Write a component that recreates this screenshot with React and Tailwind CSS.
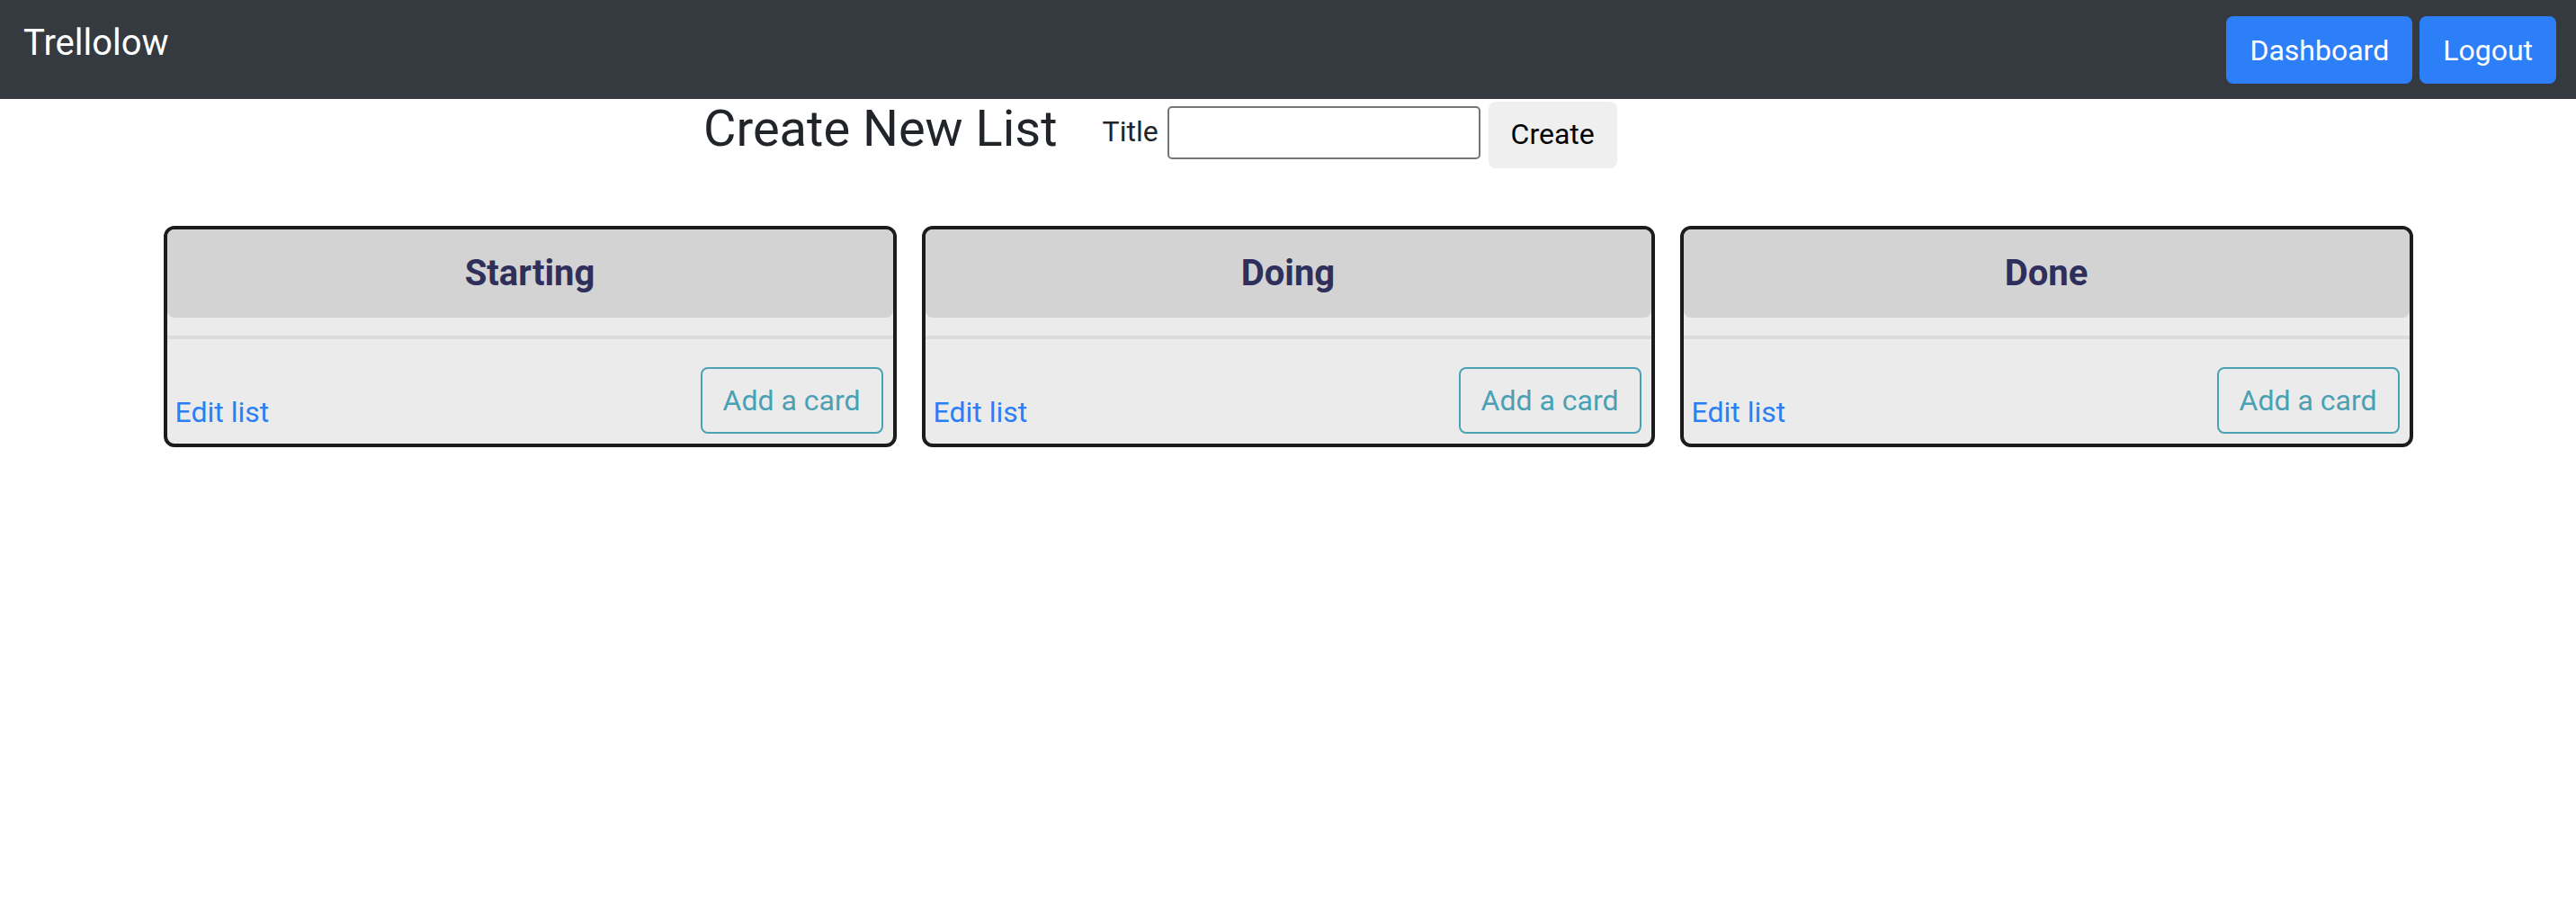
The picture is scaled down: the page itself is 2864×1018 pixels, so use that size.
import { useState } from 'react'

const lists = [
  { id: 1, name: 'Starting' },
  { id: 2, name: 'Doing' },
  { id: 3, name: 'Done' },
]

function ListCard({ list }) {
  return (
    <div className="w-[815px] border-[4px] border-[#1c1c1c] rounded-[12px] bg-[#ecebec] overflow-hidden">
      <div className="h-[98px] bg-[#d3d3d3] rounded-[8px] flex items-center justify-center">
        <span className="text-[40px] font-bold text-[#2f2f5c]">{list.name}</span>
      </div>
      <div className="mt-[20px] h-[4px] bg-[#dcdbdb]"></div>
      <div className="flex justify-between items-end pt-[31px] pb-[11px] pl-[9px] pr-[11px]">
        <a href="#" className="text-[32px] leading-[48px] text-[#2b7ff5]">Edit list</a>
        <button className="h-[74px] px-[23px] border-[2px] border-[#4aa3b5] rounded-[8px] text-[32px] text-[#4aa1b3]">
          Add a card
        </button>
      </div>
    </div>
  )
}

function App() {
  const [title, setTitle] = useState('')

  return (
    <div className="w-full min-h-screen bg-white font-['Roboto',sans-serif]">
      <nav className="h-[110px] bg-[#343a40] flex justify-between items-start pt-[18px] pl-[26px] pr-[22px]">
        <span className="text-[40px] leading-[60px] text-white">Trellolow</span>
        <div className="flex gap-[8px]">
          <button className="h-[75px] px-[26px] rounded-[8px] bg-[#2d7ff7] text-[32px] text-white">Dashboard</button>
          <button className="h-[75px] px-[26px] rounded-[8px] bg-[#2d7ff7] text-[32px] text-white">Logout</button>
        </div>
      </nav>

      <div className="flex items-start pl-[782px]">
        <h2 className="text-[56px] leading-[1.2] text-[#212529]">Create New List</h2>
        <label className="ml-[50px] mt-[12px] text-[32px] leading-[48px] text-[#212529]">Title</label>
        <input
          value={title}
          onChange={(e) => setTitle(e.target.value)}
          className="ml-[10px] mt-[8px] w-[348px] h-[59px] border-[2px] border-[#767676] rounded-[5px] px-[4px] text-[32px]"
        />
        <button className="ml-[9px] mt-[3px] w-[143px] h-[74px] rounded-[8px] bg-[#efefef] text-[32px] leading-[48px] pb-[2px] text-black">Create</button>
      </div>

      <div className="flex justify-center gap-[28px] mt-[64px]">
        {lists.map((list) => (
          <ListCard key={list.id} list={list} />
        ))}
      </div>
    </div>
  )
}

export default App
